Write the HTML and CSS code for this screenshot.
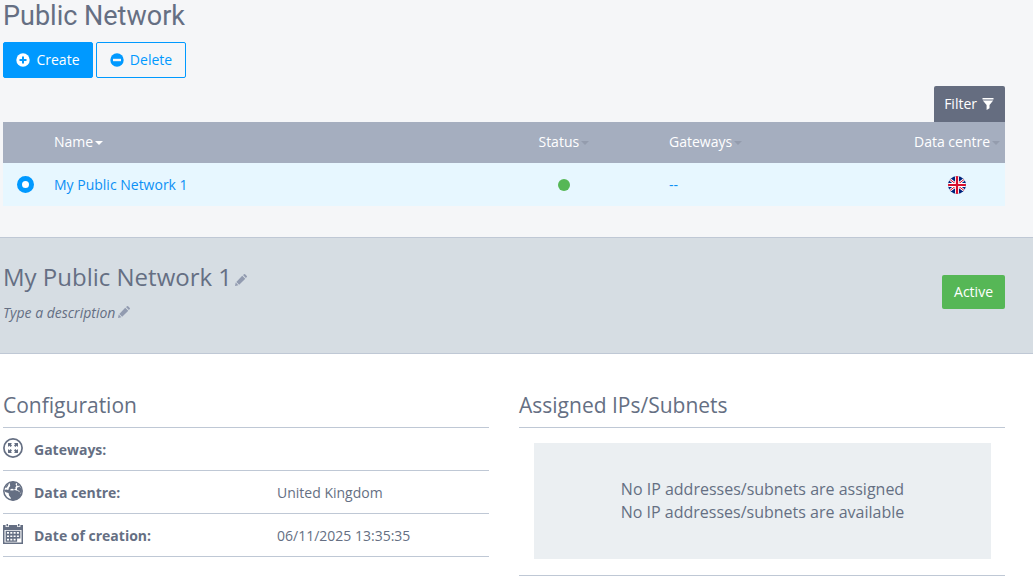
FILE: index.html
```html
<!DOCTYPE html>
<html lang="en">
  <head>
    <meta charset="utf-8" />
    <meta name="viewport" content="width=device-width, initial-scale=1.0" />
    <title>Public Network</title>
    <link rel="stylesheet" href="styles.css">
  </head>
  <body>
    <div class="top">
      <h1>Public Network</h1>
      <div class="buttons">
        <button class="btn btn-primary" type="button">
          <svg width="14" height="14" viewBox="0 0 14 14"><circle cx="7" cy="7" r="6.7" fill="#fff"/><path d="M7 3.5v7M3.5 7h7" stroke="#09f" stroke-width="2"/></svg>
          Create
        </button>
        <button class="btn" type="button">
          <svg width="14" height="14" viewBox="0 0 14 14"><circle cx="7" cy="7" r="6.7" fill="#09f"/><path d="M3 7h8" stroke="#f5f6f8" stroke-width="2.4"/></svg>
          Delete
        </button>
      </div>
      <div class="filter-row">
        <button class="filter" type="button">
          Filter
          <svg width="12" height="12" viewBox="0 0 12 12" fill="#fff"><path d="M.5 0h11v1.6H.5zM.8 2.4h10.4L7.5 7v3.2L4.6 12V7z"/></svg>
        </button>
      </div>
      <table class="list">
        <thead>
          <tr>
            <th class="col-radio"></th>
            <th>Name<span class="caret active"></span></th>
            <th class="col-status">Status<span class="caret"></span></th>
            <th class="col-gateways">Gateways<span class="caret"></span></th>
            <th class="col-dc">Data centre<span class="caret"></span></th>
          </tr>
        </thead>
        <tbody>
          <tr>
            <td class="col-radio"><input type="radio" name="network" aria-label="My Public Network 1" checked></td>
            <td><a href="#">My Public Network 1</a></td>
            <td class="col-status"><span class="dot"></span></td>
            <td><a href="#">--</a></td>
            <td class="col-dc">
              <svg class="flag" width="18" height="18" viewBox="0 0 18 18">
                <clipPath id="round"><circle cx="9" cy="9" r="9"/></clipPath>
                <g clip-path="url(#round)">
                  <path d="M0 0h18v18H0z" fill="#00247d"/>
                  <path d="M0 2l18 14M18 2L0 16" stroke="#fff" stroke-width="2.8"/>
                  <path d="M0 2l18 14M18 2L0 16" stroke="#d8102e" stroke-width="1"/>
                  <path d="M9 0v18M0 9h18" stroke="#fff" stroke-width="4"/>
                  <path d="M9 0v18M0 9h18" stroke="#d8102e" stroke-width="2.2"/>
                </g>
              </svg>
            </td>
          </tr>
        </tbody>
      </table>
    </div>

    <div class="detail">
      <div>
        <h2>My Public Network 1<button class="edit" type="button" aria-label="Edit name"><svg width="12" height="12" viewBox="0 0 12 12" fill="#929bb0"><path d="M0 12l.7-3.4 2.7 2.7zM1.3 8L7.2 1.7l3.1 3.1L4.2 10.7zM8 1.1L9.1.2q.5-.4 1 0l1.7 1.7q.4.5 0 1l-.9 1.1z"/></svg></button></h2>
        <p>Type a description<button class="edit" type="button" aria-label="Edit description"><svg width="12" height="12" viewBox="0 0 12 12" fill="#929bb0"><path d="M0 12l.7-3.4 2.7 2.7zM1.3 8L7.2 1.7l3.1 3.1L4.2 10.7zM8 1.1L9.1.2q.5-.4 1 0l1.7 1.7q.4.5 0 1l-.9 1.1z"/></svg></button></p>
      </div>
      <span class="badge">Active</span>
    </div>

    <div class="columns">
      <div>
        <h3>Configuration</h3>
        <table class="config">
          <tr>
            <td class="icon">
              <svg width="20" height="20" viewBox="0 0 20 20">
                <circle cx="10" cy="10" r="9.1" fill="none" stroke="#656f83" stroke-width="1.7"/>
                <path d="M5 5h4L7.9 6.3 9 7.5 7.6 9 6.3 7.7 5 9zM15 5v4l-1.3-1.3L12.4 9 11 7.5l1.1-1.2L11 5zM5 15v-4l1.3 1.3L7.6 11 9 12.5l-1.1 1.2L9 15zM15 15h-4l1.1-1.3L11 12.5l1.4-1.5 1.3 1.3L15 11z" fill="#656f83"/>
              </svg>
            </td>
            <th>Gateways:</th>
            <td></td>
          </tr>
          <tr>
            <td class="icon">
              <svg width="20" height="20" viewBox="0 0 20 20">
                <circle cx="10" cy="10" r="9.2" fill="none" stroke="#656f83" stroke-width="1.5"/>
                <path d="M6.6 1.6L10 .6l3.4 1-.9 1.6 1 1.6-1.1 1.4.2 1.5-1.6 1.1-1.6-1.1-1.5.3-1 1.3 2.2.2 2.8-.6 3 1 2 1.3 1.2 2-1.2 2.6-3 2.6-3.6 1-2.4-.4-.3-2.4L6 14.6 5.6 12 2.8 11.3.9 9.6 3 8.6l2.3.5L6 6.6l1.2-1.5z" fill="#656f83"/>
                <path d="M14.2 2.4l2.2 1.5-1.2 1.3-1.3-.9zM14 6.8l2.9-1.4 2 3.2-.2 3-1.6.3-1-2.2-2-.5zM2 7l2.6-4 1.2.2-1.9 3.2z" fill="#656f83"/>
              </svg>
            </td>
            <th>Data centre:</th>
            <td>United Kingdom</td>
          </tr>
          <tr>
            <td class="icon">
              <svg width="20" height="20" viewBox="0 0 20 20">
                <path d="M0 1h20v19H0z" fill="#656f83"/>
                <path d="M1.5 6h17v12.5h-17zM2.6 0h3.2v3H2.6zM14.2 0h3.2v3h-3.2z" fill="#fff"/>
                <path d="M3.5 0H5v2.3H3.5zM15 0h1.5v2.3H15z" fill="#656f83"/>
                <path d="M2.6 6.8h14.8v7.6h-3.3v3.4H2.6z" fill="#656f83"/>
                <path d="M4 8h2v1.7H4zM7.3 8h2v1.7h-2zM10.6 8h2v1.7h-2zM13.9 8h2v1.7h-2zM4 11.4h2v1.7H4zM7.3 11.4h2v1.7h-2zM10.6 11.4h2v1.7h-2zM13.9 11.4h2v1.7h-2zM4 14.8h2v1.7H4zM7.3 14.8h2v1.7h-2zM10.6 14.8h2v1.7h-2z" fill="#fff"/>
              </svg>
            </td>
            <th>Date of creation:</th>
            <td>06/11/2025 13:35:35</td>
          </tr>
        </table>
      </div>
      <div>
        <h3>Assigned IPs/Subnets</h3>
        <div class="subnets">
          <div class="empty">
            No IP addresses/subnets are assigned<br>
            No IP addresses/subnets are available
          </div>
        </div>
      </div>
    </div>
  </body>
</html>
```

FILE: styles.css
```css
* {
  margin: 0;
  padding: 0;
  box-sizing: border-box;
}
body {
  background: #fff;
  color: #656f83;
  font-family: "Open Sans", sans-serif;
  font-size: 14px;
  line-height: 20px;
}
button {
  font: inherit;
  cursor: pointer;
}
svg {
  display: block;
}
a {
  color: #0d90f5;
  text-decoration: none;
}
.top {
  background: #f5f6f8;
  padding: 0 28px 31px 3px;
}
h1 {
  font-family: Roboto, sans-serif;
  font-size: 27px;
  font-weight: 400;
  line-height: 32px;
  padding-bottom: 10px;
}
.buttons {
  display: flex;
  gap: 3px;
}
.btn {
  display: flex;
  align-items: center;
  justify-content: center;
  gap: 6px;
  width: 90px;
  height: 36px;
  background: none;
  border: 1px solid #09f;
  border-radius: 2px;
  color: #09f;
}
.btn-primary {
  background: #09f;
  color: #fff;
}
.filter-row {
  display: flex;
  justify-content: flex-end;
  padding-top: 8px;
}
.filter {
  display: flex;
  align-items: center;
  gap: 5px;
  height: 36px;
  padding: 0 11px 0 10px;
  background: #656d80;
  border: 0;
  border-radius: 2px 2px 0 0;
  color: #fff;
}
.list {
  width: 100%;
  table-layout: fixed;
  border-collapse: collapse;
}
.list th {
  height: 41px;
  padding: 0 5px 2px;
  background: #a5aebf;
  color: #fff;
  font-weight: 400;
  text-align: left;
  white-space: nowrap;
}
.list td {
  height: 43px;
  padding: 0 5px;
  background: #e7f7ff;
}
.list .col-radio {
  width: 46px;
  padding-left: 14px;
}
.list .col-status {
  width: 20%;
  text-align: center;
}
.list .col-gateways {
  width: 245px;
}
.list .col-dc {
  width: 96px;
  text-align: center;
}
.list input {
  display: block;
  appearance: none;
  width: 17px;
  height: 17px;
  background: #fff;
  border: 5px solid #09f;
  border-radius: 50%;
}
.caret {
  display: inline-block;
  margin-left: 2px;
  vertical-align: middle;
  border: 4px solid transparent;
  border-top-color: #949cad;
  border-bottom: 0;
}
.caret.active {
  border-top-color: #fff;
}
.dot {
  display: block;
  width: 12px;
  height: 12px;
  margin: 0 auto;
  background: #56b756;
  border-radius: 50%;
}
.flag {
  margin: 0 auto;
}
.detail {
  display: flex;
  justify-content: space-between;
  align-items: flex-start;
  padding: 23px 28px 30px 3px;
  background: #d6dde3;
  border-top: 1px solid #bfc8d5;
  border-bottom: 1px solid #bfc8d5;
}
h2 {
  font-size: 24px;
  font-weight: 400;
  line-height: 32px;
  padding-bottom: 10px;
}
.detail p {
  font-style: italic;
}
.edit {
  display: inline-block;
  margin-left: 3px;
  background: none;
  border: 0;
}
.badge {
  margin-top: 14px;
  padding: 7px 12px;
  background: #56b756;
  border-radius: 2px;
  color: #fff;
}
.columns {
  display: grid;
  grid-template-columns: 1fr 1fr;
  gap: 30px;
  padding: 36px 28px 4px 3px;
}
h3 {
  font-size: 21px;
  font-weight: 400;
  line-height: 30px;
  padding-bottom: 7px;
  border-bottom: 1px solid #bfc8d5;
}
.config {
  width: 100%;
  table-layout: fixed;
  border-spacing: 0;
}
.config th,
.config td {
  height: 43px;
  padding-top: 2px;
  border-bottom: 1px solid #bfc8d5;
  text-align: left;
}
.config th {
  width: 50%;
}
.config .icon {
  width: 31px;
  padding: 0 0 2px;
}
.subnets {
  padding: 15px 14px 16px 15px;
  border-bottom: 1px solid #bfc8d5;
}
.empty {
  padding: 35px 10px;
  background: #ebeff2;
  font-size: 16px;
  line-height: 23px;
  text-align: center;
}
```
